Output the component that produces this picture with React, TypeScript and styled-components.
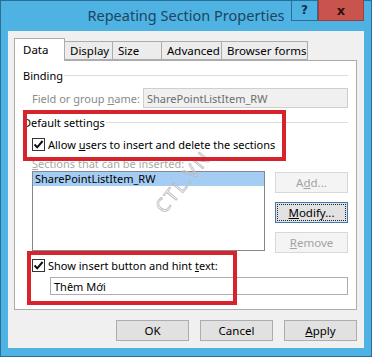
import React from "react";
import styled, { createGlobalStyle } from "styled-components";

const GlobalStyle = createGlobalStyle`
  html, body { margin: 0; padding: 0; background: #ffffff; }
  body { font-family: "Noto Sans", "DejaVu Sans", sans-serif; font-size: 11px; color: #000; }
  * { box-sizing: border-box; }
`;

const Window = styled.div`
  position: relative;
  width: 372px;
  height: 357px;
  background: #4eb2e2;
  border: 1px solid #2b6f98;
  display: flex;
  flex-direction: column;
`;

const TitleBar = styled.div`
  height: 30px;
  display: grid;
  grid-template-columns: 1fr auto 1fr;
  align-items: start;
`;

const Title = styled.div`
  grid-column: 2;
  align-self: center;
  font-size: 14.5px;
  color: #1f4560;
  padding-bottom: 2px;
  white-space: nowrap;
`;

const Caption = styled.div`
  grid-column: 3;
  justify-self: end;
  display: flex;
  margin-right: 7px;
  margin-top: -1px;
`;

const CaptionButton = styled.div<{ $close?: boolean }>`
  width: ${(p) => (p.$close ? 46 : 27)}px;
  height: 21px;
  display: flex;
  align-items: center;
  justify-content: center;
  font-weight: bold;
  font-size: ${(p) => (p.$close ? 13 : 12)}px;
  font-family: "DejaVu Sans", sans-serif;
  color: ${(p) => (p.$close ? "#2a1210" : "#16314d")};
  background: ${(p) => (p.$close ? "#c9544d" : "transparent")};
  border: 1px solid ${(p) => (p.$close ? "#a53c36" : "#2f6c93")};
  border-top: none;
`;

const Client = styled.div`
  margin: 0 7px;
  height: 317px;
  background: #f0f0f0;
  padding: 7px 7px 7px 6px;
  display: flex;
  flex-direction: column;
`;

const TabStrip = styled.div`
  display: flex;
  align-items: flex-end;
  height: 22px;
  position: relative;
  z-index: 1;
`;

const Tab = styled.div<{ $w: number; $active?: boolean }>`
  width: ${(p) => p.$w}px;
  height: ${(p) => (p.$active ? 23 : 19)}px;
  margin-bottom: ${(p) => (p.$active ? -1 : 0)}px;
  padding-left: ${(p) => (p.$active ? 8 : 5)}px;
  padding-top: ${(p) => (p.$active ? 3 : 1)}px;
  background: ${(p) => (p.$active ? "#ffffff" : "#ececec")};
  border: 1px solid #acacac;
  border-bottom: ${(p) => (p.$active ? "none" : "1px solid #acacac")};
  margin-left: -1px;
  font-size: 11.5px;
  white-space: nowrap;
  &:first-child { margin-left: 0; }
`;

const Panel = styled.div`
  background: #ffffff;
  border: 1px solid #acacac;
  padding: 7px 8px 14px 8px;
  height: 251px;
  display: flex;
  flex-direction: column;
`;

const GroupHeader = styled.div<{ $mt?: number }>`
  display: flex;
  align-items: center;
  height: 14px;
  margin-top: ${(p) => p.$mt ?? 0}px;
  gap: 1px;
  &::after {
    content: "";
    flex: 1;
    border-top: 1px solid #dcdcdc;
  }
`;

const Row = styled.div<{ $mt?: number; $h?: number }>`
  display: flex;
  align-items: center;
  margin-left: 9px;
  margin-top: ${(p) => p.$mt ?? 0}px;
  height: ${(p) => p.$h ?? 14}px;
`;

const DisabledLabel = styled.span<{ $light?: boolean }>`
  flex: 1;
  color: ${(p) => (p.$light ? "#a8a8a8" : "#8a8a8a")};
  white-space: nowrap;
`;

const ReadonlyField = styled.div`
  width: 205px;
  height: 20px;
  background: #f0f0f0;
  border: 1px solid #cfcfcf;
  color: #6d6d6d;
  padding-left: 3px;
  display: flex;
  align-items: center;
`;

const CheckBox = styled.span`
  width: 13px;
  height: 13px;
  border: 1px solid #333333;
  background: #ffffff;
  display: inline-flex;
  align-items: center;
  justify-content: center;
  margin-right: 3px;
  flex: none;
`;

const CheckText = styled.span`
  white-space: nowrap;
`;

const ListRow = styled.div`
  display: flex;
  align-items: flex-start;
  margin-left: 9px;
  margin-top: 1px;
  gap: 10px;
`;

const ListBox = styled.div`
  flex: 1;
  height: 80px;
  border: 1px solid #828790;
  background: #ffffff;
`;

const ListItem = styled.div<{ $selected?: boolean }>`
  height: 14px;
  line-height: 14px;
  padding-left: 2px;
  background: ${(p) => (p.$selected ? "#a5cdf3" : "transparent")};
  white-space: nowrap;
`;

const ButtonColumn = styled.div`
  display: flex;
  flex-direction: column;
  gap: 9px;
  margin-top: 1px;
`;

const SideButton = styled.div<{ $disabled?: boolean; $focused?: boolean }>`
  width: 73px;
  height: 21px;
  display: flex;
  align-items: center;
  justify-content: center;
  font-size: 11.5px;
  color: ${(p) => (p.$disabled ? "#a3a3a3" : "#000")};
  background: ${(p) => (p.$disabled ? "#f4f4f4" : "#e2e2e2")};
  border: 1px solid ${(p) => (p.$disabled ? "#d8d8d8" : "#3d7ab3")};
  outline: ${(p) => (p.$focused ? "1px dotted #222" : "none")};
  outline-offset: -3px;
`;

const HintRow = styled.div`
  display: flex;
  margin-left: 27px;
  margin-top: 5px;
`;

const HintInput = styled.div`
  flex: 1;
  height: 18px;
  border: 1px solid #abadb3;
  background: #ffffff;
  padding-left: 3px;
  display: flex;
  align-items: center;
`;

const Footer = styled.div`
  display: flex;
  justify-content: flex-end;
  gap: 11px;
  margin-top: 10px;
`;

const DialogButton = styled.div`
  width: 73px;
  height: 21px;
  display: flex;
  align-items: center;
  justify-content: center;
  background: #e1e1e1;
  border: 1px solid #adadad;
  font-size: 11.5px;
`;

const Highlight = styled.div<{ $x: number; $y: number; $w: number; $h: number }>`
  position: absolute;
  left: ${(p) => p.$x}px;
  top: ${(p) => p.$y}px;
  width: ${(p) => p.$w}px;
  height: ${(p) => p.$h}px;
  border: 4px solid #d7242c;
  pointer-events: none;
`;

const Watermark = styled.div`
  position: absolute;
  left: 158px;
  top: 196px;
  font-size: 19px;
  letter-spacing: 2px;
  color: rgba(255, 255, 255, 0.25);
  -webkit-text-stroke: 0.7px #b4b4b4;
  transform: rotate(-50deg);
  transform-origin: left center;
  pointer-events: none;
`;

const Check = () => (
  <svg width="11" height="11" viewBox="0 0 11 11">
    <path d="M1.5 5.5 L4.2 8.3 L9.6 2" fill="none" stroke="#111" strokeWidth="2" />
  </svg>
);

export default function App() {
  return (
    <>
      <GlobalStyle />
      <Window>
        <TitleBar>
          <Title>Repeating Section Properties</Title>
          <Caption>
            <CaptionButton>?</CaptionButton>
            <CaptionButton $close>x</CaptionButton>
          </Caption>
        </TitleBar>
        <Client>
          <TabStrip>
            <Tab $w={51} $active>Data</Tab>
            <Tab $w={49}>Display</Tab>
            <Tab $w={50}>Size</Tab>
            <Tab $w={61}>Advanced</Tab>
            <Tab $w={87}>Browser forms</Tab>
          </TabStrip>
          <Panel>
            <GroupHeader>Binding</GroupHeader>
            <Row $mt={6} $h={20}>
              <DisabledLabel>
                Field or group <u>n</u>ame:
              </DisabledLabel>
              <ReadonlyField>SharePointListItem_RW</ReadonlyField>
            </Row>
            <GroupHeader $mt={7}>Default settings</GroupHeader>
            <Row $mt={8}>
              <CheckBox>
                <Check />
              </CheckBox>
              <CheckText>
                Allow <u>u</u>sers to insert and delete the sections
              </CheckText>
            </Row>
            <Row $mt={5}>
              <DisabledLabel $light>
                <u>S</u>ections that can be inserted:
              </DisabledLabel>
            </Row>
            <ListRow>
              <ListBox>
                <ListItem $selected>SharePointListItem_RW</ListItem>
              </ListBox>
              <ButtonColumn>
                <SideButton $disabled>
                  A<u>d</u>d...
                </SideButton>
                <SideButton $focused>
                  <u>M</u>odify...
                </SideButton>
                <SideButton $disabled>
                  <u>R</u>emove
                </SideButton>
              </ButtonColumn>
            </ListRow>
            <Row $mt={5}>
              <CheckBox>
                <Check />
              </CheckBox>
              <CheckText>
                Show insert button and hint <u>t</u>ext:
              </CheckText>
            </Row>
            <HintRow>
              <HintInput>Thêm Mới</HintInput>
            </HintRow>
          </Panel>
          <Footer>
            <DialogButton>OK</DialogButton>
            <DialogButton>Cancel</DialogButton>
            <DialogButton>
              <u>A</u>pply
            </DialogButton>
          </Footer>
        </Client>
        <Watermark>CTL.VN</Watermark>
        <Highlight $x={22} $y={109} $w={263} $h={51} />
        <Highlight $x={26} $y={250} $w={210} $h={54} />
      </Window>
    </>
  );
}
